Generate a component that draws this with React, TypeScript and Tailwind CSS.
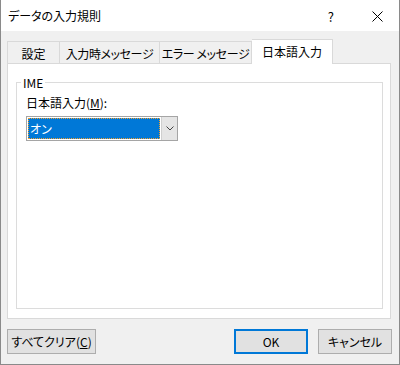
import React from 'react';

const tabs = [
  { label: '設定', w: 'w-[53px]' },
  { label: '入力時メッセージ', w: 'w-[100px]' },
  { label: 'エラー メッセージ', w: 'w-[92px]' },
];

function DialogButton({ children, primary, className }: { children: React.ReactNode; primary?: boolean; className?: string }) {
  return (
    <button
      className={`h-[25px] bg-[#e1e1e1] text-[12px] leading-none text-black whitespace-nowrap flex items-center justify-center ${
        primary ? 'border-2 border-[#0078d7]' : 'border border-[#adadad]'
      } ${className ?? ''}`}
    >
      {children}
    </button>
  );
}

export default function App() {
  return (
    <div
      className="w-[400px] h-[365px] bg-[#f0f0f0] border-l border-r border-b border-[#8a8a8a] flex flex-col text-black whitespace-nowrap [font-feature-settings:'palt']"
      style={{ fontFamily: '"Noto Sans CJK JP", "Noto Sans", sans-serif' }}
    >
      {/* title bar */}
      <div className="h-[31px] bg-white flex items-center pl-[7px] pt-[1px] shrink-0">
        <span className="text-[12px] leading-none">データの入力規則</span>
        <span className="ml-auto text-[13px] leading-none mr-[38px]">?</span>
        <svg width="11" height="11" viewBox="0 0 11 11" className="mr-[16px]">
          <path d="M0.5 0.5 L10.5 10.5 M10.5 0.5 L0.5 10.5" stroke="#000" strokeWidth="1" fill="none" />
        </svg>
      </div>

      <div className="flex-1 flex flex-col pl-[6px] pr-[8px]">
        {/* tabs */}
        <div className="flex items-end h-[32px] relative z-10">
          {tabs.map((t, i) => (
            <div
              key={t.label}
              className={`${t.w} h-[22px] border-t border-[#d9d9d9] ${i === 0 ? 'border-l' : ''} border-r bg-[#f0f0f0] flex items-center justify-center text-[12px] leading-none pt-[2px] ${i > 0 ? 'tracking-[-0.4px]' : ''}`}
            >
              {t.label}
            </div>
          ))}
          <div className="w-[81px] h-[25px] -mb-px border-t border-r border-[#d9d9d9] bg-white flex items-center justify-center text-[12px] leading-none">
            日本語入力
          </div>
        </div>

        {/* panel */}
        <div className="h-[256px] border border-[#d9d9d9] bg-white pt-[18px] pl-[8px] pr-[7px] pb-[9px] flex">
          <div className="relative flex-1 border border-[#dcdcdc] pl-[9px] pt-[13px]">
            <span className="absolute left-[4px] -top-[7px] bg-white px-[2px] text-[12px] leading-[14px]">IME</span>
            <div className="text-[12px] leading-[14px]">
              日本語入力(<span className="underline">M</span>):
            </div>
            <div className="mt-[6px] w-[152px] h-[25px] border border-[#a5a5a5] flex">
              <div className="flex-1 p-[1px]">
                <div className="h-full bg-[#0078d7] border border-dotted border-[#f0a030] flex items-center pl-[1px] text-white text-[12px] leading-none">
                  オン
                </div>
              </div>
              <div className="w-[16px] bg-[#e5e5e5] border-l border-[#cfcfcf] flex items-center justify-center">
                <svg width="8" height="5" viewBox="0 0 8 5">
                  <path d="M0.5 0.5 L4 4 L7.5 0.5" stroke="#444" strokeWidth="1" fill="none" />
                </svg>
              </div>
            </div>
          </div>
        </div>

        {/* buttons */}
        <div className="flex mt-[10px]">
          <DialogButton className="w-[89px]">
            すべてクリア(<span className="underline">C</span>)
          </DialogButton>
          <DialogButton primary className="w-[74px] ml-auto">
            OK
          </DialogButton>
          <DialogButton className="w-[74px] ml-[10px] -mr-[1px]">キャンセル</DialogButton>
        </div>
      </div>
    </div>
  );
}
